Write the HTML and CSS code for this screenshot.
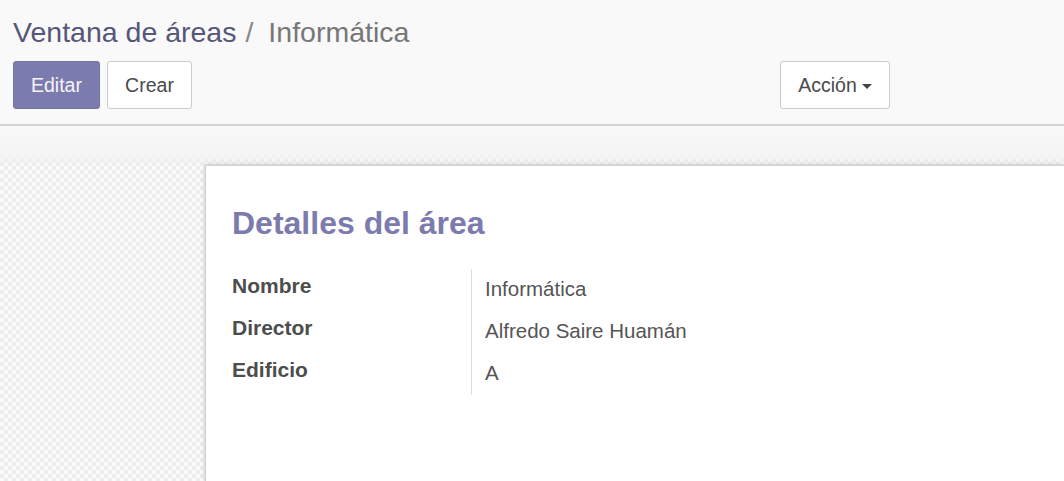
FILE: index.html
```html
<!DOCTYPE html>
<html lang="es">
<head>
<meta charset="utf-8">
<title>Ventana de áreas / Informática</title>
<link rel="stylesheet" href="styles.css">
</head>
<body>
<div class="page">
  <header class="control-panel">
    <ol class="breadcrumb">
      <li class="crumb-link">Ventana de áreas</li>
      <li class="crumb-sep">/</li>
      <li class="crumb-active">Informática</li>
    </ol>
    <div class="cp-buttons">
      <div class="cp-left">
        <button class="btn btn-primary">Editar</button>
        <button class="btn btn-default">Crear</button>
      </div>
      <div class="cp-right">
        <button class="btn btn-default btn-action">Acción <span class="caret"></span></button>
      </div>
    </div>
  </header>
  <main class="form-bg">
    <section class="sheet">
      <h1 class="sheet-title">Detalles del área</h1>
      <div class="fields">
        <div class="label">Nombre</div>
        <div class="value">Informática</div>
        <div class="label">Director</div>
        <div class="value">Alfredo Saire Huamán</div>
        <div class="label">Edificio</div>
        <div class="value">A</div>
      </div>
    </section>
  </main>
</div>
</body>
</html>
```

FILE: styles.css
```css
* { box-sizing: border-box; }
html, body { margin: 0; padding: 0; height: 100%; overflow: hidden; }
body {
  font-family: "Liberation Sans", Arial, sans-serif;
  background: #ffffff;
  color: #4c4c4c;
}
.page { display: flex; flex-direction: column; height: 100%; }

.control-panel {
  background: #f9f9f9;
  border-bottom: 2px solid #d4d4d4;
  padding: 16px 0 0 13px;
  height: 126px;
  flex: none;
}
.breadcrumb {
  list-style: none;
  margin: 0 0 13px 0;
  padding: 0;
  display: flex;
  gap: 9px;
  font-size: 28.5px;
  line-height: 32px;
}
.crumb-link { color: #55577a; }
.crumb-sep { color: #888; }
.crumb-active { color: #777777; margin-left: 6px; }

.cp-buttons { display: flex; }
.cp-left { width: 767px; display: flex; gap: 7px; }
.btn {
  font-family: "Liberation Sans", Arial, sans-serif;
  font-size: 19.5px;
  height: 48px;
  padding: 0 16px;
  border-radius: 3px;
  border: 1px solid #cccccc;
  background: #ffffff;
  color: #4a4a4a;
  display: inline-flex;
  align-items: center;
  gap: 5px;
  cursor: pointer;
}
.btn-primary {
  background: #7c7bad;
  border-color: #7473a6;
  color: #f4f4f8;
  width: 87px;
  justify-content: center;
}
.btn-default { width: 85px; justify-content: center; }
.btn-action { width: 110px; }
.caret {
  display: inline-block;
  width: 0; height: 0;
  border-left: 5px solid transparent;
  border-right: 5px solid transparent;
  border-top: 5px solid #444;
  margin-top: 2px;
}

.form-bg {
  flex: 1;
  padding-top: 38px;
  background:
    linear-gradient(to bottom, #f9f9f9 0, #f4f4f4 26px, rgba(238,238,238,0.3) 36px) top left / 100% 38px no-repeat,
    repeating-conic-gradient(#ececec 0 25%, #fafafa 0 50%) 0 0 / 8px 8px;
}
.sheet {
  margin-left: 205px;
  height: 100%;
  background: #ffffff;
  border-top: 2px solid #d6d6d6;
  border-left: 1px solid #cfcfcf;
  box-shadow: -1px 0 3px rgba(0,0,0,0.12);
  padding: 39px 0 0 26px;
}
.sheet-title {
  margin: 0 0 28px 0;
  font-size: 32px;
  line-height: 36px;
  font-weight: bold;
  color: #7c7bad;
}
.fields {
  display: grid;
  grid-template-columns: 239px 1fr;
  grid-auto-rows: 42px;
  padding-bottom: 6px;
  width: 800px;
}
.label {
  font-size: 21px;
  line-height: 24px;
  font-weight: bold;
  color: #4d4d4d;
  padding-top: 5px;
}
.value {
  font-size: 20.5px;
  line-height: 24px;
  color: #555555;
  padding: 8px 0 0 13px;
  border-left: 1px solid #dddddd;
}
```
